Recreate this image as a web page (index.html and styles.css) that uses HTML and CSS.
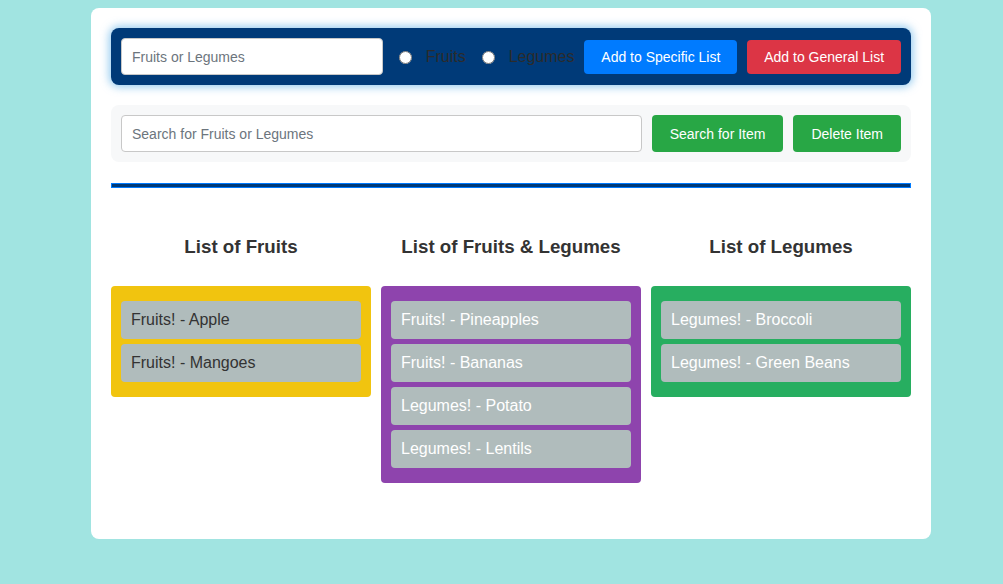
FILE: index.html
```html
<!DOCTYPE html>
<html>
<head>
<meta charset="utf-8">
<link rel="stylesheet" href="styles.css">
</head>
<body>
<div class="app">
  <div class="add-bar">
    <input class="field add-field" type="text" placeholder="Fruits or Legumes">
    <label class="opt"><input type="radio" name="kind"><span>Fruits</span></label>
    <label class="opt"><input type="radio" name="kind"><span>Legumes</span></label>
    <button class="btn btn-blue btn-specific">Add to Specific List</button>
    <button class="btn btn-red btn-general">Add to General List</button>
  </div>
  <div class="search-bar">
    <input class="field search-field" type="text" placeholder="Search for Fruits or Legumes">
    <button class="btn btn-green">Search for Item</button>
    <button class="btn btn-green">Delete Item</button>
  </div>
  <div class="divider"></div>
  <div class="columns">
    <div class="col">
      <h3>List of Fruits</h3>
      <ul class="list list-yellow">
        <li>Fruits! - Apple</li>
        <li>Fruits! - Mangoes</li>
      </ul>
    </div>
    <div class="col">
      <h3>List of Fruits &amp; Legumes</h3>
      <ul class="list list-purple">
        <li>Fruits! - Pineapples</li>
        <li>Fruits! - Bananas</li>
        <li>Legumes! - Potato</li>
        <li>Legumes! - Lentils</li>
      </ul>
    </div>
    <div class="col">
      <h3>List of Legumes</h3>
      <ul class="list list-green">
        <li>Legumes! - Broccoli</li>
        <li>Legumes! - Green Beans</li>
      </ul>
    </div>
  </div>
</div>
</body>
</html>
```

FILE: styles.css
```css
body {
  margin: 8px;
  background: #a1e4e1;
  font-family: "Liberation Sans", Arial, sans-serif;
  color: #333;
}

.app {
  width: 800px;
  margin-left: 83px;
  background: #fff;
  border-radius: 8px;
  padding: 20px;
}

.add-bar {
  display: flex;
  align-items: center;
  background: #003a78;
  border-radius: 8px;
  padding: 10px;
  box-shadow: 0 0 8px 2px rgba(80, 170, 230, 0.6);
}

.field {
  box-sizing: border-box;
  height: 37px;
  border: 1px solid #c8c8c8;
  border-radius: 4px;
  padding: 0 10px;
  font-family: "Liberation Sans", Arial, sans-serif;
  font-size: 14px;
  color: #333;
  background: #fff;
}

.field::placeholder {
  color: #6c757d;
}

.add-field {
  width: 262px;
}

.opt {
  display: flex;
  align-items: center;
  font-size: 16px;
  color: #2b2b2b;
  margin-left: 16px;
}

.opt + .opt {
  margin-left: 16px;
}

.opt input {
  width: 13px;
  height: 13px;
  margin: 2px 14px 0 0;
}

.btn {
  box-sizing: border-box;
  border: none;
  border-radius: 4px;
  color: #fff;
  font-family: "Liberation Sans", Arial, sans-serif;
  font-size: 14px;
  padding: 0 18px;
  white-space: nowrap;
  cursor: pointer;
}

.btn-blue {
  background: #007bff;
}

.btn-red {
  background: #dc3545;
}

.btn-green {
  background: #28a745;
  height: 37px;
  margin-left: 10px;
}

.btn-specific {
  width: 153px;
  height: 34px;
  padding: 0;
  margin-left: 10px;
}

.btn-general {
  width: 154px;
  height: 34px;
  padding: 0;
  margin-left: 10px;
}

.search-bar {
  display: flex;
  align-items: center;
  margin-top: 20px;
  background: #f7f8f9;
  border-radius: 8px;
  padding: 10px;
}

.search-field {
  flex: 1;
}

.divider {
  margin-top: 21px;
  height: 3px;
  background: #003a78;
  border: 1px solid #007bff;
}

.columns {
  display: flex;
  gap: 10px;
  padding-top: 48px;
  margin-bottom: 36px;
  align-items: flex-start;
}

.col {
  flex: 1;
}

.col h3 {
  margin: 0 0 28px;
  text-align: center;
  font-size: 18.72px;
  line-height: 22px;
  color: #333;
}

.list {
  list-style: none;
  margin: 0;
  padding: 15px 10px 10px;
  border-radius: 4px;
}

.list li {
  background: #b0bcbc;
  border-radius: 4px;
  padding: 10px;
  font-size: 16px;
  line-height: 18px;
  margin-bottom: 5px;
  color: #fff;
}

.list-yellow {
  background: #f1c40f;
}

.list-yellow li {
  color: #333;
}

.list-purple {
  background: #8e44ad;
}

.list-green {
  background: #27ae60;
}
```
